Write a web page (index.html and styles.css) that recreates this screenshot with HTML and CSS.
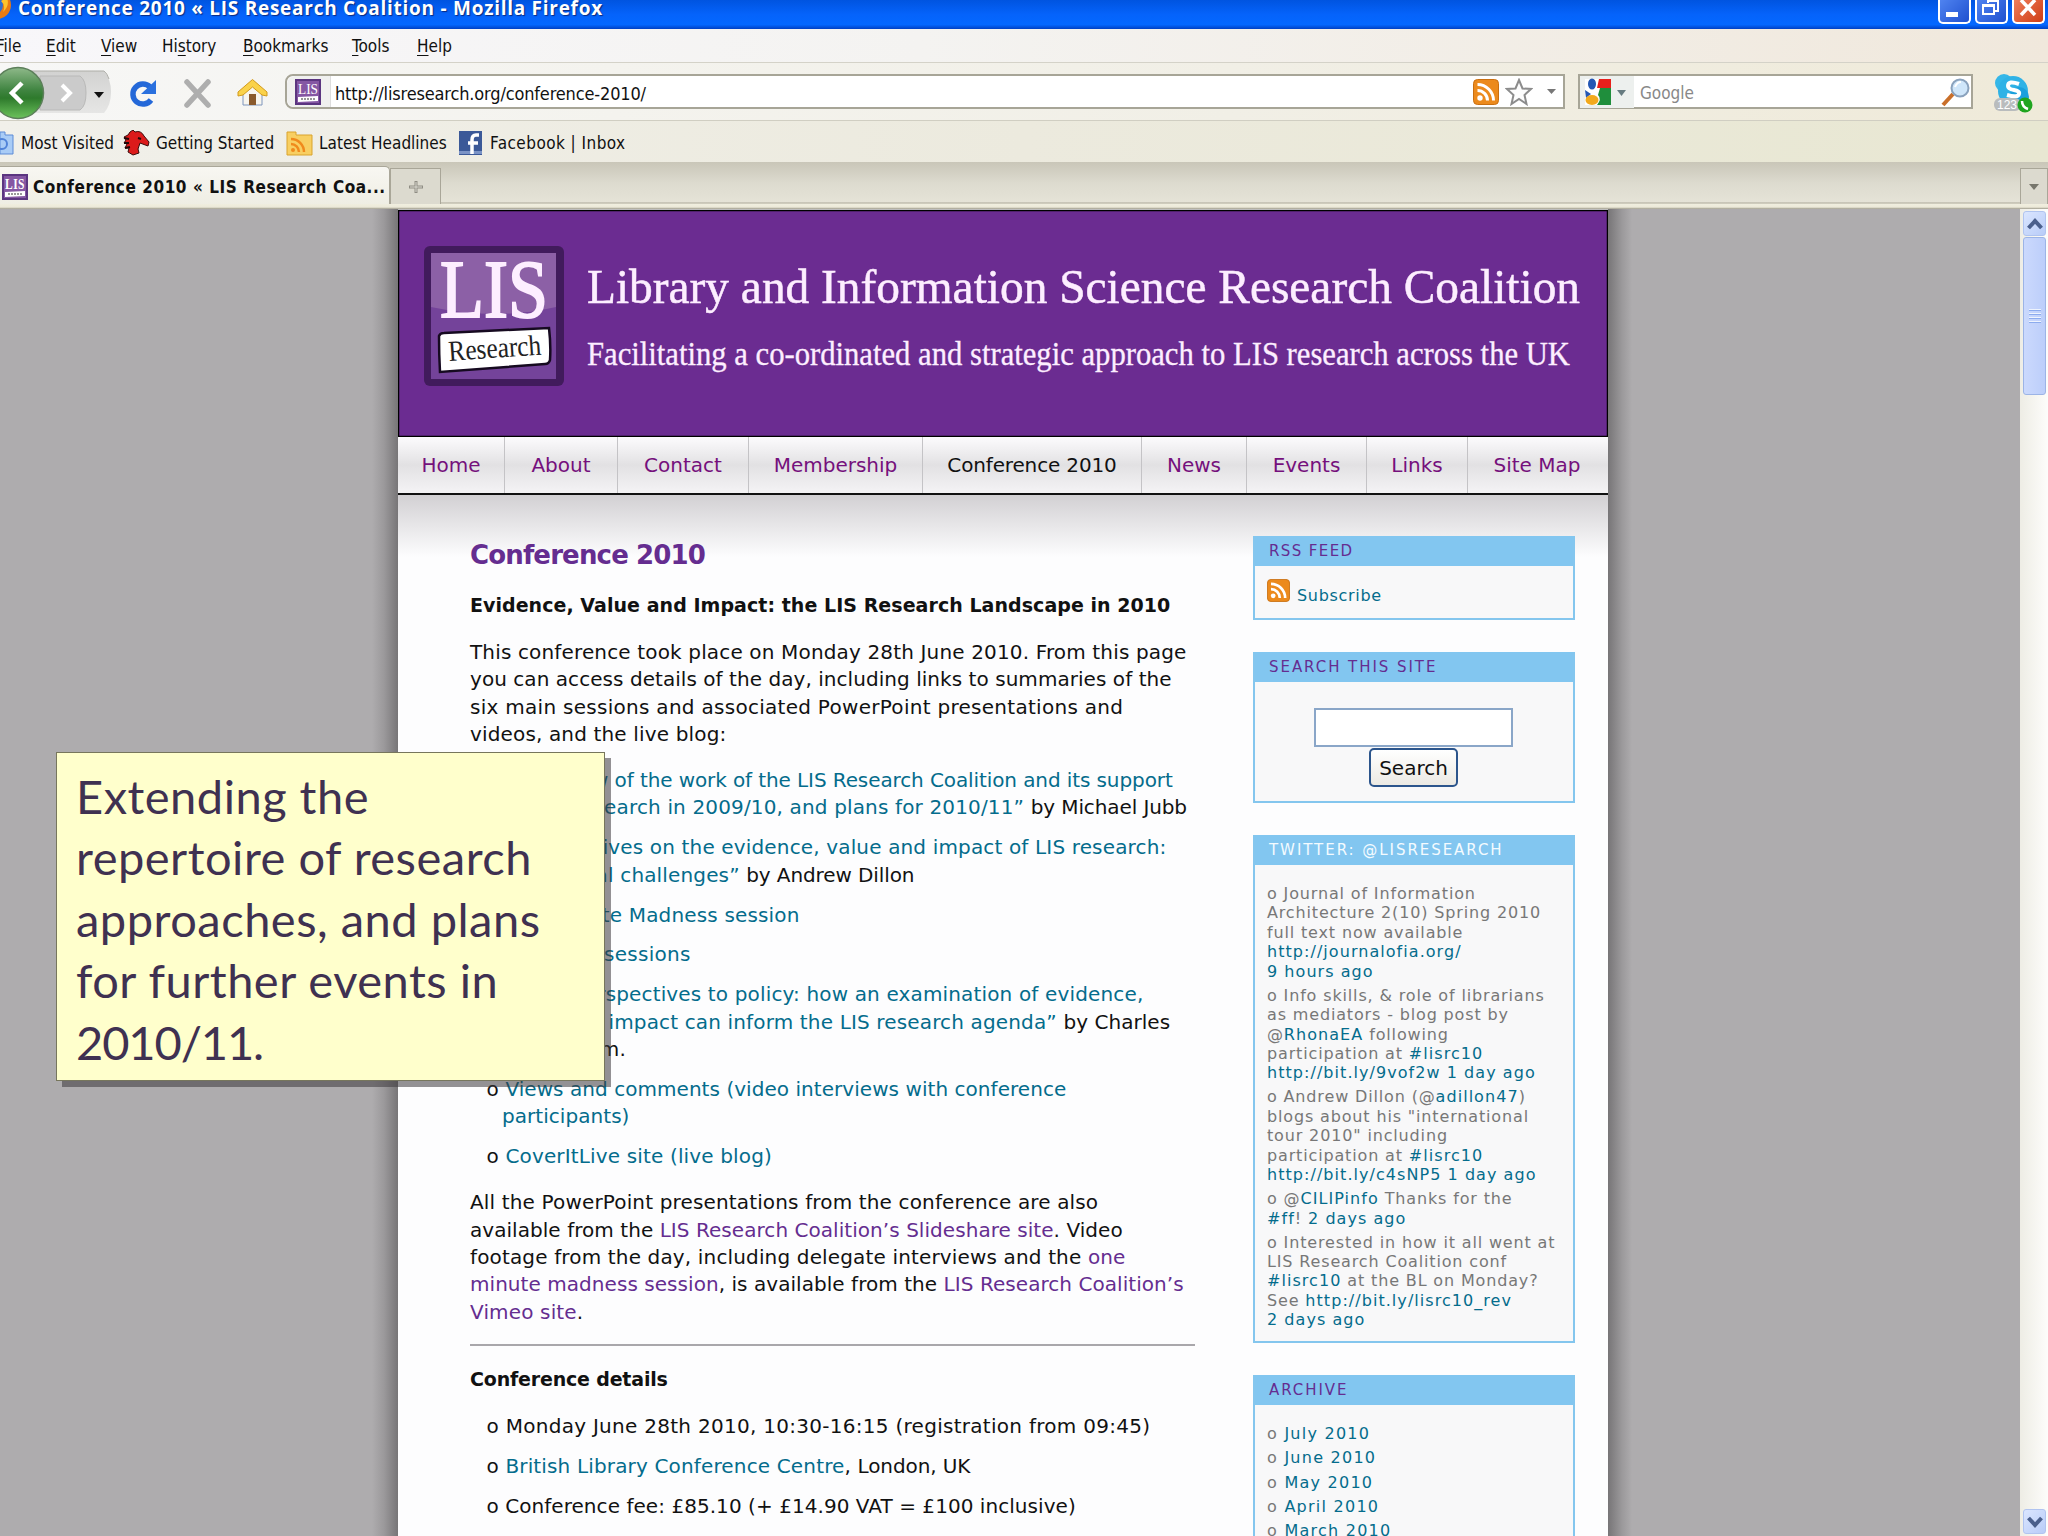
FILE: index.html
```html
<!DOCTYPE html>
<html lang="en">
<head>
    <meta charset="UTF-8">
    <title>Conference 2010 « LIS Research Coalition</title>
    <link rel="stylesheet" href="styles.css">
</head>
<body>
    <!-- shared icon shapes -->
    <svg width="0" height="0" class="defs">
        <symbol id="lis" viewBox="0 0 26 26">
            <rect width="26" height="26" fill="#5b3580"/>
            <rect x="2" y="2" width="22" height="22" fill="#8557a3"/>
            <text x="3" y="14.5" font-size="14" textLength="20" lengthAdjust="spacingAndGlyphs" fill="#fff" font-family="Liberation Serif, serif">LIS</text>
            <path d="M3 18l20-1v5l-20 1z" fill="#fff"/>
            <path d="M6 20h14" stroke="#777" stroke-width="1.5" stroke-dasharray="2 1"/>
        </symbol>
        <symbol id="rss" viewBox="0 0 26 26">
            <rect x=".5" y=".5" width="25" height="25" rx="4" fill="#ec8a1c" stroke="#c96f10"/>
            <circle cx="7" cy="19" r="2.7" fill="#fff"/>
            <path d="M4.5 11.5a10 10 0 0 1 10 10M4.5 5.500a16 16 0 0 1 16 16" fill="none" stroke="#fff" stroke-width="3"/>
        </symbol>
    </svg>

    <div class="titlebar">
        <svg class="fx" width="12" height="26" viewBox="0 0 12 26"><circle cx="-3" cy="5" r="14" fill="#e87b14"/><circle cx="-7" cy="5" r="10" fill="#2f6fd0"/><path d="M1 1q5 4 2 11q7-6 4-14z" fill="#fcc32c"/></svg>
        <span class="window-title">Conference 2010 « LIS Research Coalition - Mozilla Firefox</span>
        <div class="win-buttons">
            <span class="win"><svg width="34" height="26" viewBox="0 0 34 26"><path d="M8 12h12v5H8z" fill="#fff"/></svg></span>
            <span class="win"><svg width="34" height="26" viewBox="0 0 34 26"><path d="M13 3V1h10v10h-3M8 5h11v9H8zM8 6h11" fill="none" stroke="#fff" stroke-width="2"/></svg></span>
            <span class="win close"><svg width="34" height="26" viewBox="0 0 34 26"><path d="M9 0l14 15M23 0L9 15" stroke="#fff" stroke-width="3.5"/></svg></span>
        </div>
    </div>

    <div class="menubar">
        <span class="file"><u>F</u>ile</span>
        <span><u>E</u>dit</span>
        <span><u>V</u>iew</span>
        <span>Hi<u>s</u>tory</span>
        <span><u>B</u>ookmarks</span>
        <span><u>T</u>ools</span>
        <span><u>H</u>elp</span>
    </div>

    <div class="toolbar">
        <svg class="nav-icons" width="285" height="57" viewBox="0 62 285 57">
            <defs>
                <linearGradient id="green" x1="0" y1="0" x2="0" y2="1"><stop offset="0" stop-color="#8fb98a"/><stop offset=".45" stop-color="#3f8440"/><stop offset=".6" stop-color="#2e7a2c"/><stop offset="1" stop-color="#6cc35c"/></linearGradient>
                <linearGradient id="pill" x1="0" y1="0" x2="0" y2="1"><stop offset="0" stop-color="#d2d2d1"/><stop offset="1" stop-color="#e6e6e5"/></linearGradient>
            </defs>
            <path d="M20 70h84q7 8 7 21t-7 21H20z" fill="url(#pill)"/>
            <path d="M20 70h84q3 2 5 8" fill="none" stroke="#adada8"/>
            <path d="M40 75h40q6 4 6 17t-6 17H40z" fill="#cbcbcb" stroke="#b9b9b8"/>
            <path d="M62 84l8 8-8 8" fill="none" stroke="#fff" stroke-width="4"/>
            <path d="M94 91h10l-5 6z" fill="#111"/>
            <circle cx="18" cy="92" r="25.500" fill="url(#green)" stroke="#5c7f5a" stroke-width="1.500"/>
            <path d="M22 82L12 92l10 10" fill="none" stroke="#fff" stroke-width="4.500"/>
            <path d="M150 86a10 10 0 1 0 1 13" fill="none" stroke="#2468d8" stroke-width="5.500"/>
            <path d="M156 79v14h-15z" fill="#2a70de"/>
            <path d="M187 81l21 23M208 81l-21 23" stroke="#aeaeae" stroke-width="5.500" stroke-linecap="round"/>
            <path d="M243 91l9-10 10 10v13h-19z" fill="#f8f5ee" stroke="#7f96bd"/>
            <path d="M249 93h7v11h-7z" fill="#8a5a2c"/>
            <path d="M238 95v-4l14.500-12.500L267 91v4l-5-1-9.500-8-9.500 8z" fill="#fad24a" stroke="#d29a1c"/>
        </svg>
        <div class="urlbar">
            <span class="favicon"><svg width="26" height="26"><use href="#lis"/></svg></span>
            <span class="url">http://lisresearch.org/conference-2010/</span>
            <svg width="26" height="26"><use href="#rss"/></svg>
            <svg class="star" width="28" height="28" viewBox="0 0 28 28"><path d="M14 2l3.500 8.500 8.500.5-6.500 6 2 9L14 21l-7.500 5 2-9L2 11l8.500-.5z" fill="#fdfdfd" stroke="#8c8c8c" stroke-width="2"/></svg>
            <svg width="9" height="6"><path d="M0 0h9L4.500 5z" fill="#777"/></svg>
        </div>
        <div class="searchbar">
            <svg width="54" height="32" viewBox="0 0 54 32"><path d="M0 0h54v32H0z" fill="#edf0ee"/><path d="M5 3h26v26H5z" fill="#fff"/><path d="M19 3h12v9H17z" fill="#e8201c"/><path d="M20 12h11v17H17q5-6 1-10z" fill="#1f8e3c"/><ellipse cx="12" cy="8" rx="4" ry="5.500" fill="#2457b4"/><path d="M5 14l6 4-5 4z" fill="#2457b4"/><ellipse cx="12" cy="24" rx="6.500" ry="5" fill="#f2a91d"/><path d="M37 14h9l-4.500 6z" fill="#667b80"/></svg>
            <span class="placeholder">Google</span>
            <svg width="30" height="30" viewBox="0 0 30 30"><path d="M2 28l10-11" stroke="#c96f2a" stroke-width="4"/><circle cx="19" cy="11" r="8.500" fill="#cfe6fa" stroke="#8aa2bd" stroke-width="2"/><path d="M14 10q2-5 6-5" fill="none" stroke="#fff" stroke-width="2"/></svg>
        </div>
        <svg class="skype" width="40" height="40" viewBox="0 0 40 40"><circle cx="10" cy="9" r="9" fill="#35b7e8"/><circle cx="19" cy="17" r="15" fill="#2fb2e6"/><circle cx="25" cy="23" r="10" fill="#1ba0dc"/><path d="M25 10q-11-4-11 2 0 3 6 4t5 4q-1 4-12 1" fill="none" stroke="#fff" stroke-width="4"/><rect x="0" y="24" width="27" height="13" rx="6" fill="#b9bcbd"/><text x="3" y="35" font-size="12" fill="#fff" font-family="Liberation Sans, sans-serif">123</text><circle cx="31" cy="31" r="7.500" fill="#1fa51f"/><path d="M28 27q0 6 6 8" stroke="#fff" stroke-width="2.500" fill="none"/></svg>
    </div>

    <div class="bookmarks">
        <svg class="b1" width="14" height="24" viewBox="0 0 14 24"><path d="M0 1h5v3h8v19H0z" fill="#a9ccf6" stroke="#5d8bd6"/><circle cx="2" cy="13" r="5" fill="none" stroke="#5083d8" stroke-width="2"/></svg>
        <span class="t1">Most Visited</span>
        <svg class="b2" width="27" height="26" viewBox="0 0 27 26"><path d="M7 2l3-2 2 2q6-2 9 4l5 6-1 4-8-3-2 6 1 4-6 2-5-3 1-4-4 0 2-4-3-1 2-3-2-3 4-2z" fill="#dc1a1a" stroke="#3c0c0c"/><path d="M1 8l5 1M1 13l5 0M2 18l5-1M15 8l3 1" stroke="#200808" stroke-width="2"/></svg>
        <span class="t2">Getting Started</span>
        <svg class="b3" width="27" height="26" viewBox="0 0 27 26"><path d="M1 2h9v3h16v20H1z" fill="#f8cf62" stroke="#d9a32c"/><circle cx="7" cy="20" r="2" fill="#f08a1c"/><path d="M5 14a8 8 0 0 1 8 8M5 9a13 13 0 0 1 13 13" fill="none" stroke="#f08a1c" stroke-width="2.500"/></svg>
        <span class="t3">Latest Headlines</span>
        <svg class="b4" width="23" height="24" viewBox="0 0 23 24"><path d="M0 0h23v24H0z" fill="#3b5998"/><path d="M0 20h23v3H0z" fill="#7b93c6"/><path d="M20 4h-3q-4 0-4 5v14M9 12h10" fill="none" stroke="#fff" stroke-width="3.500"/></svg>
        <span class="t4">Facebook | Inbox</span>
    </div>

    <div class="tabs">
        <div class="tab"><svg width="26" height="26"><use href="#lis"/></svg><span>Conference 2010 « LIS Research Coa...</span></div>
        <div class="newtab"><svg width="14" height="12"><path d="M5.500 0h3v12h-3zM0 4.500h14v3H0z" fill="#8f8d84"/><path d="M6.500 1h1v10h-1zM1 5.500h12v1H1z" fill="#dcdacf"/></svg></div>
        <div class="alltabs"><svg width="10" height="6"><path d="M0 0h10L5 6z" fill="#77766c"/></svg></div>
    </div>

    <div class="viewport">
        <div class="shade left"></div>
        <div class="page">
            <svg class="banner" width="1210" height="228" viewBox="398 209 1210 228">
                <rect x="398.500" y="210.500" width="1209" height="226" fill="#6b2c91" stroke="#000" stroke-width="1.500"/>
                <rect x="424" y="246" width="140" height="140" rx="6" fill="#411b5c"/>
                <rect x="431" y="253" width="125" height="126" fill="#74439a"/>
                <path d="M431 253h125v54q-60 14-125 0z" fill="#8c60a6"/>
                <g fill="#fdeeff" stroke="#fdeeff" font-family="Liberation Serif, serif">
                    <text x="440" y="317" font-size="83" stroke-width="2" textLength="108" lengthAdjust="spacingAndGlyphs">LIS</text>
                    <text x="587" y="303" font-size="49" stroke-width=".5" textLength="993" lengthAdjust="spacingAndGlyphs">Library and Information Science Research Coalition</text>
                    <text x="587" y="365" font-size="33" stroke-width=".3" textLength="983" lengthAdjust="spacingAndGlyphs">Facilitating a co-ordinated and strategic approach to LIS research across the UK</text>
                </g>
                <path d="M439 336q1-3 5-3l105-5q2 17 1 32-1 4-5 4l-105 8q-1-18-1-36z" fill="#fff" stroke="#160a20" stroke-width="2.500"/>
                <text x="449" y="361" font-size="29" textLength="93" lengthAdjust="spacingAndGlyphs" transform="rotate(-4 449 361)" font-family="Liberation Serif, serif" fill="#222">Research</text>
            </svg>

            <ul class="nav">
                <li>Home</li>
                <li>About</li>
                <li>Contact</li>
                <li>Membership</li>
                <li class="current">Conference 2010</li>
                <li>News</li>
                <li>Events</li>
                <li>Links</li>
                <li>Site Map</li>
            </ul>

            <div class="columns">
                <div class="content">
                    <h1>Conference 2010</h1>
                    <h2>Evidence, Value and Impact: the LIS Research Landscape in 2010</h2>
                    <p>This conference took place on Monday 28th June 2010. From this page<br><span class="tight">you can access details of the day, including links to summaries of the</span><br><span class="loose">six main sessions and associated PowerPoint presentations and</span><br>videos, and the live blog:</p>
                    <ul>
                        <li><a><span class="tighter">“Overview of the work of the LIS Research Coalition and its support</span><br>for LIS research in 2009/10, and plans for 2010/11”</a> <span class="tighter">by Michael Jubb</span></li>
                        <li><a>“Perspectives on the evidence, value and impact of LIS research:<br>conceptual challenges”</a> <span class="tighter">by Andrew Dillon</span></li>
                        <li><a>One Minute Madness session</a></li>
                        <li><a class="loose">Breakout sessions</a></li>
                        <li><a>“From perspectives to policy: how an examination of evidence,<br>value and impact can inform the LIS research agenda”</a> <span class="tight">by Charles</span><br>Oppenheim.</li>
                        <li><a class="tight">Views and comments (video interviews with conference<br>participants)</a></li>
                        <li><a>CoverItLive site (live blog)</a></li>
                    </ul>
                    <p class="more">All the PowerPoint presentations from the conference are also<br><span class="tight">available from the <a class="visited">LIS Research Coalition’s Slideshare site</a>. Video</span><br>footage from the day, including delegate interviews and the <a class="visited">one<br><span class="tight">minute madness session</span></a><span class="tight">, is available from the <a class="visited">LIS Research Coalition’s</a></span><a class="visited"><br>Vimeo site</a>.</p>
                    <hr>
                    <h3>Conference details</h3>
                    <ul class="details">
                        <li class="loose">Monday June 28th 2010, 10:30-16:15 (registration from 09:45)</li>
                        <li><a>British Library Conference Centre</a>, <span class="tighter">London, UK</span></li>
                        <li class="tight">Conference fee: £85.10 (+ £14.90 VAT = £100 inclusive)</li>
                    </ul>
                </div>

                <div class="sidebar">
                    <div class="box rss">
                        <h4>RSS FEED</h4>
                        <div class="feed"><svg width="23" height="23"><use href="#rss"/></svg><a>Subscribe</a></div>
                    </div>
                    <div class="box search">
                        <h4>SEARCH THIS SITE</h4>
                        <div class="field"></div>
                        <div class="button">Search</div>
                    </div>
                    <div class="box twitter">
                        <h4>TWITTER: @LISRESEARCH</h4>
                        <ul>
                            <li>o Journal of Information<br>Architecture 2(10) Spring 2010<br>full text now available<br><a>http://journalofia.org/<br>9 hours ago</a></li>
                            <li>o Info skills, &amp; role of librarians<br>as mediators - blog post by<br>@<a>RhonaEA</a> following<br>participation at <a>#lisrc10<br>http://bit.ly/9vof2w 1 day ago</a></li>
                            <li>o Andrew Dillon (@<a>adillon47</a>)<br>blogs about his "international<br>tour 2010" including<br>participation at <a>#lisrc10<br>http://bit.ly/c4sNP5 1 day ago</a></li>
                            <li>o @<a>CILIPinfo</a> Thanks for the<br><a>#ff</a>! <a>2 days ago</a></li>
                            <li>o Interested in how it all went at<br>LIS Research Coalition conf<br><a>#lisrc10</a> at the BL on Monday?<br>See <a>http://bit.ly/lisrc10_rev<br>2 days ago</a></li>
                        </ul>
                    </div>
                    <div class="box archive">
                        <h4>ARCHIVE</h4>
                        <ul>
                            <li>o <a>July 2010</a></li>
                            <li>o <a>June 2010</a></li>
                            <li>o <a>May 2010</a></li>
                            <li>o <a>April 2010</a></li>
                            <li>o <a>March 2010</a></li>
                        </ul>
                    </div>
                </div>
            </div>
        </div>
        <div class="shade right"></div>
        <div class="scrollbar">
            <div class="arrow"><svg width="16" height="12"><path d="M1.500 10L8 3l6.500 7" fill="none" stroke="#4a5f8c" stroke-width="4"/></svg></div>
            <div class="thumb"><i></i><i></i><i></i><i></i></div>
            <div class="arrow down"><svg width="16" height="12"><path d="M1.500 2L8 9l6.500-7" fill="none" stroke="#4a5f8c" stroke-width="4"/></svg></div>
        </div>
    </div>

    <div class="note">Extending the<br>repertoire of research<br>approaches, and plans<br>for further events in<br><span class="years">2010/11.</span></div>
</body>
</html>
```
FILE: styles.css
```css
* {
    box-sizing: border-box;
}
body {
    margin: 0;
    width: 2048px;
    height: 1536px;
    overflow: hidden;
    position: relative;
    display: flex;
    flex-direction: column;
    font-family: "DejaVu Sans", Verdana, sans-serif;
    white-space: nowrap;
    color: #111;
}
svg {
    display: block;
    flex: none;
}
.defs {
    position: absolute;
}
ul, h1, h2, h3, h4, p {
    margin: 0;
    padding: 0;
    list-style: none;
}

/* Browser window */
.titlebar {
    height: 29px;
    flex: none;
    display: flex;
    background: linear-gradient(#0054e0, #0563fb 50%, #0468ff 85%, #0040c4);
    overflow: hidden;
}
.fx {
    margin-right: 6px;
}
.window-title {
    font: bold 19px/17px "Open Sans", sans-serif;
    letter-spacing: 0.730px;
    color: #fff;
    text-shadow: 1px 1px 1px #0a2a80;
    flex: 1;
}
.win-buttons {
    display: flex;
    gap: 4px;
    margin-right: 3px;
}
.win {
    width: 33px;
    height: 24px;
    border: 2px solid #fff;
    border-top: 0;
    border-radius: 0 0 5px 5px;
    background: linear-gradient(135deg, #4f83f0, #1f50cf);
}
.win svg {
    margin-left: -2px;
}
.close {
    background: linear-gradient(135deg, #ee7d5a, #cf3d14);
}
.menubar, .bookmarks {
    font: 17px "DejaVu Sans Condensed", "DejaVu Sans", sans-serif;
}
.menubar {
    height: 33px;
    flex: none;
    display: grid;
    grid-template-columns: 46px 55px 61px 81px 109px 65px 80px;
    line-height: 34px;
    background: linear-gradient(90deg, #f8f7fa, #f4f3f1 45%, #f0e8dc);
}
.file {
    text-indent: -4px;
}
.menubar u {
    text-underline-offset: 3px;
}
.toolbar {
    height: 58px;
    flex: none;
    display: flex;
    border-top: 1px solid #d4d2c8;
    background: linear-gradient(90deg, #f7f7f6, #f1efe6 60%, #efead9);
}
.urlbar, .searchbar {
    height: 35px;
    margin-top: 11px;
    display: flex;
    align-items: center;
    background: #fff;
    border: 2px solid #a7a597;
}
.urlbar {
    width: 1280px;
    border-radius: 8px 0 0 8px;
    padding-right: 7px;
}
.favicon {
    width: 44px;
    height: 31px;
    padding: 3px 8px;
    border-right: 1px solid #ddd;
    border-radius: 8px 0 0 8px;
    background: #f0f0ef;
}
.url {
    flex: 1;
    margin-left: 4px;
    padding-top: 3px;
    font: 18px "DejaVu Sans Condensed", "DejaVu Sans", sans-serif;
    letter-spacing: -0.150px;
}
.star {
    margin: 0 14px 0 6px;
}
.searchbar {
    width: 395px;
    margin-left: 13px;
}
.placeholder {
    flex: 1;
    margin-left: 6px;
    padding-top: 3px;
    font: 17px "DejaVu Sans Condensed", sans-serif;
    color: #888;
}
.skype {
    margin: 11px 0 0 21px;
}
.bookmarks {
    height: 42px;
    flex: none;
    display: flex;
    align-items: center;
    padding-top: 2px;
    border-top: 1px solid #d0cec2;
    background: linear-gradient(90deg, #f1f0ea, #eceade 50%, #e8e7d2);
}
.t1 { margin-left: 7px; width: 102px; }
.t2 { margin-left: 6px; width: 130px; }
.t3 { margin-left: 6px; width: 140px; }
.t4 { margin-left: 8px; letter-spacing: 0.450px; }
.tabs {
    height: 47px;
    flex: none;
    display: flex;
    align-items: flex-end;
    padding-bottom: 5px;
    background: linear-gradient(#c9c6b8, #dddbcf 45%, #e5e3d7 85%, #b4b1a2 87%, #f0eedf 90%, #ece9d8 96%, #9e9b8c);
}
.tab {
    width: 390px;
    height: 38px;
    display: flex;
    align-items: center;
    gap: 5px;
    padding: 2px 0 0 2px;
    border: 1px solid #aaa799;
    border-width: 1px 1px 0 0;
    border-radius: 0 5px 0 0;
    background: linear-gradient(#f8f7f2, #efeee4);
    font: bold 17px "DejaVu Sans Condensed", sans-serif;
    letter-spacing: 0.550px;
}
.newtab, .alltabs {
    height: 36px;
    border: 1px solid #a9a698;
    border-bottom: 0;
    background: #dcdacf;
    display: flex;
    align-items: center;
    justify-content: center;
}
.newtab {
    width: 51px;
}
.alltabs {
    width: 28px;
    margin-left: auto;
}

/* Web page */
.viewport {
    flex: 1;
    min-height: 0;
    overflow: hidden;
    display: flex;
    background: #aeacae;
}
.shade {
    width: 398px;
    background: linear-gradient(90deg, #aeacae 372px, #9b999b 384px, #777577);
}
.shade.right {
    width: 412px;
    background: linear-gradient(270deg, #aeacae 388px, #9b999b 398px, #777577);
}
.page {
    width: 1210px;
    background: #fdfdfe;
}
.nav {
    height: 58px;
    display: grid;
    grid-template-columns: 107px 113px 131px 174px 219px 105px 120px 101px 140px;
    border-bottom: 2px solid #111;
    background: linear-gradient(#fcfbfd, #e2e1e3 50%, #f4f3f5);
    font-size: 20px;
    line-height: 56px;
    text-align: center;
    color: #75107c;
}
.nav li {
    border-right: 1px solid #c4c3c6;
}
.nav li:last-child {
    border: 0;
    padding-right: 2px;
}
.nav .current {
    color: #111;
    letter-spacing: -0.150px;
}
.columns {
    display: flex;
    height: 1050px;
    padding-top: 41px;
    background: linear-gradient(#d2d0d3, #fdfdfe 62px);
}
.content {
    width: 783px;
    padding: 1px 0 0 72px;
    font-size: 20px;
    line-height: 27.300px;
    letter-spacing: 0.150px;
}
.tight {
    letter-spacing: 0.050px;
}
.tighter {
    letter-spacing: -0.100px;
}
.loose {
    letter-spacing: 0.280px;
}
.content h1 {
    font-size: 26px;
    line-height: 36px;
    letter-spacing: -0.850px;
    color: #652d90;
}
.content h2, .content h3 {
    font-size: 19px;
    line-height: 27px;
    letter-spacing: 0.050px;
}
.content h3 {
    letter-spacing: -0.180px;
}
.content h2 {
    margin: 19px 0 20px;
}
.content a, .sidebar a {
    color: #046c8c;
}
.content .visited {
    color: #652d90;
}
.content ul {
    margin: 19px 0 0 32px;
}
.content li {
    margin-bottom: 12.600px;
}
.content li::before {
    content: "o ";
    margin-left: -15.500px;
}
.content .more {
    margin-top: 19px;
}
.content hr {
    width: 725px;
    margin: 18px 0 20px;
    border: 0;
    border-top: 2px solid #a9a7ab;
}
.content .details {
    margin-top: 20px;
}
.sidebar {
    width: 322px;
    margin-left: 72px;
    font-size: 16px;
    line-height: 19.400px;
    letter-spacing: 0.850px;
    color: #777;
}
.sidebar .twitter a {
    letter-spacing: 1.050px;
}
.box {
    border: 2px solid #84c6ee;
    border-top: 0;
    background: #f8f8f9;
    margin-bottom: 32px;
}
.box h4 {
    height: 30px;
    padding-left: 14px;
    background: #82c6f0;
    font-weight: normal;
    font-size: 15px;
    line-height: 30px;
    letter-spacing: 1.950px;
    color: #652d90;
}
.rss {
    height: 84px;
}
.rss h4 {
    letter-spacing: 1.400px;
}
.feed {
    display: flex;
    align-items: flex-start;
    padding: 13px 0 0 12px;
}
.feed a {
    margin: 7px 0 0 7px;
    letter-spacing: 0.700px;
}
.search {
    height: 151px;
}
.field {
    width: 199px;
    height: 39px;
    margin: 26px auto 1px 59px;
    border: 2px solid #8aa6c8;
    background: #fff;
}
.button {
    width: 89px;
    height: 39px;
    margin: 0 auto 0 114px;
    border: 2px solid #2c558c;
    border-radius: 5px;
    background: linear-gradient(#fff, #eceae4);
    font-size: 20px;
    line-height: 36px;
    letter-spacing: 0;
    text-align: center;
    color: #111;
}
.twitter {
    height: 508px;
}
.twitter h4 {
    color: #f4fbff;
}
.sidebar ul {
    padding: 19px 0 0 12px;
}
.twitter li {
    margin-bottom: 4.700px;
}
.archive {
    height: 200px;
}
.archive li {
    height: 24.300px;
    letter-spacing: 1.250px;
}
.scrollbar {
    width: 28px;
    display: flex;
    flex-direction: column;
    padding: 2px 2px 2px 3px;
    background: linear-gradient(90deg, #eeede5, #fdfdfb);
}
.arrow {
    height: 25px;
    flex: none;
    display: flex;
    align-items: center;
    justify-content: center;
    border: 1px solid #b0c4f0;
    border-radius: 3px;
    background: linear-gradient(135deg, #dbe6ff, #b8ccf8);
}
.thumb {
    height: 158px;
    margin-top: 1px;
    display: flex;
    flex-direction: column;
    align-items: center;
    justify-content: center;
    gap: 2px;
    border: 1px solid #9cb4e6;
    border-radius: 3px;
    background: linear-gradient(90deg, #cbd9fd, #bccefa);
}
.thumb i {
    width: 12px;
    height: 2px;
    background: #eef4fe;
    border-bottom: 1px solid #8cabee;
}
.down {
    margin-top: auto;
}

/* Caption laid over the window */
.note {
    position: absolute;
    left: 56px;
    top: 752px;
    width: 549px;
    height: 329px;
    padding: 13px 0 0 19px;
    border: 1px solid #77765c;
    background: #ffffcc;
    box-shadow: 6px 6px 0 rgba(60, 56, 60, 0.55);
    font: 47px/61.400px Lato, sans-serif;
    letter-spacing: 0.500px;
    color: #3f3151;
}
.years {
    letter-spacing: -1.100px;
}
```
